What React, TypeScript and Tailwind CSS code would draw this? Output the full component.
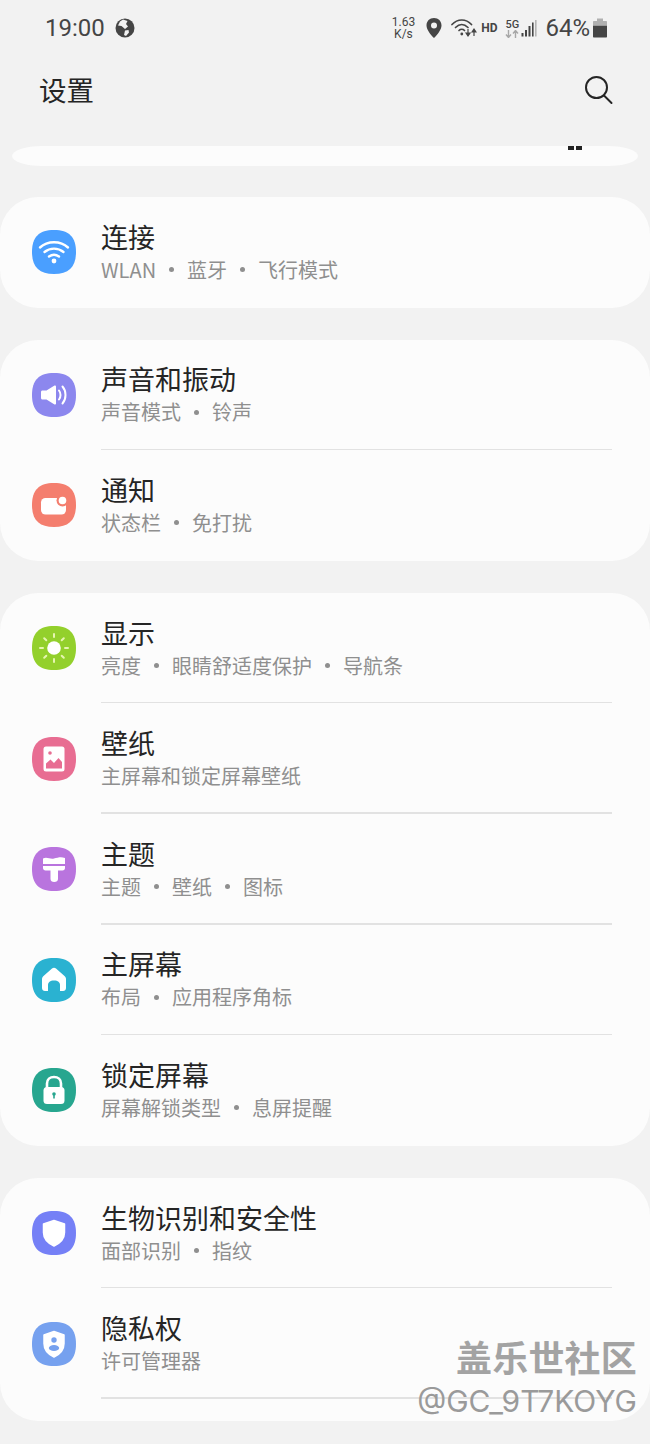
import React from 'react';

const cjk = { fontFamily: '"Noto Sans CJK SC", "Noto Sans", sans-serif' };

const Squircle = ({ color, children }: { color: string; children: React.ReactNode }) => (
    <svg width="44" height="44" viewBox="0 0 44 44" className="shrink-0">
        <path d="M22 0C37 0 44 7 44 22C44 37 37 44 22 44C7 44 0 37 0 22C0 7 7 0 22 0Z" fill={color} />
        {children}
    </svg>
);

const WifiIcon = () => (
    <Squircle color="#4a9fff">
        <g fill="none" stroke="#fff" strokeWidth="2.4" strokeLinecap="round">
            <path d="M8 17.5C15.5 10.5 28.5 10.5 36 17.5" />
            <path d="M12.5 22C18 17.5 26 17.5 31.5 22" />
            <path d="M17 26.5C20 24.3 24 24.3 27 26.5" />
        </g>
        <circle cx="22" cy="31" r="2.4" fill="#fff" />
    </Squircle>
);

const SoundIcon = () => (
    <Squircle color="#8c87ee">
        <path d="M10.5 17.5H14.5L22.5 12.5C23.2 12.2 24 12.6 24 13.5V30.5C24 31.4 23.2 31.8 22.5 31.5L14.5 26.5H10.5C9.6 26.5 9 25.9 9 25V19C9 18.1 9.6 17.5 10.5 17.5Z" fill="#fff" />
        <g fill="none" stroke="#fff" strokeWidth="2" strokeLinecap="round">
            <path d="M27 17.5C29 20 29 24 27 26.5" />
            <path d="M30.5 13.5C34.5 18 34.5 26 30.5 30.5" />
        </g>
    </Squircle>
);

const NotifyIcon = () => (
    <Squircle color="#f47e6e">
        <rect x="9" y="15" width="25" height="16.5" rx="4.5" fill="#fff" />
        <circle cx="30.5" cy="17.5" r="6" fill="#f47e6e" />
        <circle cx="30.5" cy="17.5" r="3.8" fill="#fff" />
    </Squircle>
);

const SunIcon = () => (
    <Squircle color="#93d02c">
        <circle cx="22" cy="22" r="6.8" fill="#fff" />
        <g stroke="#e6f5b0" strokeWidth="2" strokeLinecap="round">
            <path d="M22 8V11" />
            <path d="M22 33V36" />
            <path d="M8 22H11" />
            <path d="M33 22H36" />
            <path d="M12.2 12.2L14.3 14.3" />
            <path d="M29.7 29.7L31.8 31.8" />
            <path d="M12.2 31.8L14.3 29.7" />
            <path d="M29.7 14.3L31.8 12.2" />
        </g>
    </Squircle>
);

const WallpaperIcon = () => (
    <Squircle color="#e86d92">
        <rect x="11.5" y="9.5" width="21" height="25" rx="2.5" fill="#fff" />
        <circle cx="18" cy="16" r="1.8" fill="#e86d92" />
        <path d="M14 31.5V26.5L18.5 22.5L22 26L26.5 21L30 25V31.5Z" fill="#e86d92" />
    </Squircle>
);

const ThemeIcon = () => (
    <Squircle color="#b974de">
        <path d="M11 11.5C15 9.5 18 12.5 22 11.5C26 10.5 29 9.5 33 11V17H11Z" fill="#fff" />
        <path d="M11 19H33V21C33 22.5 32 23.5 30.5 23.5H26V32C26 34 24.5 35 22.2 35C20 35 18.5 34 18.5 32V23.5H13.5C12 23.5 11 22.5 11 21Z" fill="#fff" />
    </Squircle>
);

const HomeIcon = () => (
    <Squircle color="#2ab2d1">
        <path fillRule="evenodd" d="M20 10.5C21.2 9.5 22.8 9.5 24 10.5L32.5 18C33.5 18.8 34 20 34 21.2V30C34 32 32.7 33 31 33H28V27C28 24.5 26 22.5 22 22.5C18 22.5 16 24.5 16 27V33H13C11.3 33 10 32 10 30V21.2C10 20 10.5 18.8 11.5 18Z" fill="#fff" />
    </Squircle>
);

const LockIcon = () => (
    <Squircle color="#27a68f">
        <path d="M15 20V15.5C15 11.5 18 9 22 9C26 9 29 11.5 29 15.5V20" fill="none" stroke="#fff" strokeWidth="2.6" />
        <rect x="11.5" y="19" width="21" height="17" rx="3.5" fill="#fff" />
        <circle cx="22" cy="26" r="1.8" fill="#27a68f" />
        <rect x="21.2" y="26" width="1.6" height="4.5" fill="#27a68f" />
    </Squircle>
);

const ShieldIcon = () => (
    <Squircle color="#7580f6">
        <path d="M22 9.5L32.5 13V21.5C32.5 28 27.5 32.5 22 35C16.5 32.5 11.5 28 11.5 21.5V13Z" fill="#fff" stroke="#fff" strokeWidth="1.5" strokeLinejoin="round" />
    </Squircle>
);

const PrivacyIcon = () => (
    <Squircle color="#76a1ef">
        <path d="M22 9.5L32 13V21.5C32 28 27.5 32.5 22 35C16.5 32.5 12 28 12 21.5V13Z" fill="#fff" stroke="#fff" strokeWidth="1.5" strokeLinejoin="round" />
        <circle cx="22" cy="18" r="2.7" fill="#76a1ef" />
        <ellipse cx="22" cy="26" rx="5.2" ry="3" fill="#76a1ef" />
    </Squircle>
);

const Row = ({ icon, title, items, divider }: { icon: React.ReactNode; title: string; items: string[]; divider?: boolean }) => (
    <div className="h-[110.6px] relative flex items-center pl-[32px]">
        {icon}
        <div className="ml-[25px] flex flex-col -mt-[1px]">
            <div className="text-[27px] leading-[36px] text-[#252525]">{title}</div>
            <div className="flex items-center text-[20px] leading-[30px] text-[#8f8f8f]">
                {items.map((item, i) => (
                    <React.Fragment key={item}>
                        {i > 0 && <span className="w-[5px] h-[5px] rounded-full bg-[#8f8f8f] mx-[13px]" />}
                        <span>{item}</span>
                    </React.Fragment>
                ))}
            </div>
        </div>
        {divider && <div className="absolute left-[101px] right-[38px] bottom-0 h-[1.5px] bg-[#e2e2e2]" />}
    </div>
);

const Card = ({ children, className = '' }: { children: React.ReactNode; className?: string }) => (
    <div className={`bg-[#fcfcfc] rounded-[38px] overflow-hidden ${className}`}>{children}</div>
);

const StatusBar = () => (
    <div className="h-[56px] flex items-center pl-[45px] pr-[43px] text-[#454545]" style={{ fontFamily: 'Roboto, sans-serif' }}>
        <span className="text-[24px] leading-none">19:00</span>
        <svg width="20" height="20" viewBox="0 0 20 20" className="ml-[10px]">
            <circle cx="10" cy="10" r="9.5" fill="#454545" />
            <path d="M8 1.5L12.5 3L11 6L13 8.5L10 11L6.5 8L3 7.5L5 3.5Z" fill="#f2f2f2" />
            <path d="M10 12.5L13.5 12L14 14.5L11 18L9 17Z" fill="#f2f2f2" />
        </svg>
        <div className="ml-auto flex items-center">
            <div className="flex flex-col items-center text-[12px] leading-[12px] mr-[11px]">
                <span>1.63</span>
                <span>K/s</span>
            </div>
            <svg width="16" height="20" viewBox="0 0 16 20" className="mr-[9px]">
                <path fillRule="evenodd" d="M8 0C12.4 0 15.5 3.2 15.5 7.4C15.5 11.5 11.5 16.5 8 20C4.5 16.5 0.5 11.5 0.5 7.4C0.5 3.2 3.6 0 8 0ZM8 4.5A3 3 0 1 0 8 10.5A3 3 0 1 0 8 4.5Z" fill="#454545" />
            </svg>
            <svg width="26" height="20" viewBox="0 0 26 20" className="mr-[4px]">
                <g fill="none" stroke="#454545" strokeWidth="1.7" strokeLinecap="round">
                    <path d="M1 6.5C6.5 0.5 15 0.5 20.5 6.5" />
                    <path d="M4.5 9.5C8.5 5.5 13 5.5 17 9.5" />
                    <path d="M8 12.5C9.5 11 12 11 13.5 12.5" />
                </g>
                <circle cx="10.8" cy="16" r="1.4" fill="#454545" />
                <path d="M17 11V17M15 15L17 18L19 15Z M23 18V12M21 14L23 11L25 14Z" stroke="#454545" strokeWidth="1.2" fill="#454545" />
            </svg>
            <span className="text-[12px] font-bold mr-[8px]">HD</span>
            <div className="flex flex-col items-center mr-[2px]">
                <span className="text-[11px] leading-[11px] font-medium">5G</span>
                <svg width="14" height="8" viewBox="0 0 14 8">
                    <path d="M3.5 0V7M1 4.5L3.5 7.5L6 4.5M10.5 8V1M8 3.5L10.5 0.5L13 3.5" fill="none" stroke="#a8a8a8" strokeWidth="1.4" />
                </svg>
            </div>
            <svg width="16" height="18" viewBox="0 0 16 18" className="mr-[8px]">
                <rect x="0.5" y="14" width="2" height="3.5" fill="#454545" />
                <rect x="4" y="11" width="2" height="6.5" fill="#454545" />
                <rect x="7.5" y="7" width="2" height="10.5" fill="#454545" />
                <rect x="11" y="3.5" width="1.6" height="14" fill="#454545" />
                <rect x="14" y="1" width="1.6" height="16.5" fill="#b5b5b5" />
            </svg>
            <span className="text-[24px] leading-none">64%</span>
            <svg width="14" height="20" viewBox="0 0 14 20" className="ml-[3px]">
                <path d="M4 0.5H10V3H13C13.6 3 14 3.4 14 4V7H0V4C0 3.4 0.4 3 1 3H4Z" fill="#b0b0b0" />
                <path d="M0 7.5H14V18.5C14 19.2 13.6 19.5 13 19.5H1C0.4 19.5 0 19.2 0 18.5Z" fill="#454545" />
            </svg>
        </div>
    </div>
);

export default function App() {
    return (
        <div className="w-[650px] h-[1444px] bg-[#f2f2f2] relative overflow-hidden" style={cjk}>
            <StatusBar />

            <header className="h-[68px] flex items-center justify-between pl-[39px] pr-[36px]">
                <h1 className="text-[27.5px] font-normal text-[#252525]">设置</h1>
                <svg width="30" height="30" viewBox="0 0 30 30" fill="none" stroke="#252525" strokeWidth="2" strokeLinecap="round">
                    <circle cx="12.5" cy="12.5" r="10.5" />
                    <path d="M20 20.5L27.5 28" />
                </svg>
            </header>

            <div className="mt-[22px] mx-[12px] h-[20px] bg-[#fcfcfc] rounded-[30px/10px] relative">
                <div className="absolute left-[554px] top-0 w-[17px] h-[4px] flex gap-[2px] justify-center">
                    <span className="w-[6px] h-[4px] bg-[#222]" />
                    <span className="w-[6px] h-[4px] bg-[#222]" />
                </div>
            </div>

            <div className="mt-[31px] flex flex-col gap-[32px]">
                <Card>
                    <Row icon={<WifiIcon />} title="连接" items={['WLAN', '蓝牙', '飞行模式']} />
                </Card>
                <Card>
                    <Row icon={<SoundIcon />} title="声音和振动" items={['声音模式', '铃声']} divider />
                    <Row icon={<NotifyIcon />} title="通知" items={['状态栏', '免打扰']} />
                </Card>
                <Card>
                    <Row icon={<SunIcon />} title="显示" items={['亮度', '眼睛舒适度保护', '导航条']} divider />
                    <Row icon={<WallpaperIcon />} title="壁纸" items={['主屏幕和锁定屏幕壁纸']} divider />
                    <Row icon={<ThemeIcon />} title="主题" items={['主题', '壁纸', '图标']} divider />
                    <Row icon={<HomeIcon />} title="主屏幕" items={['布局', '应用程序角标']} divider />
                    <Row icon={<LockIcon />} title="锁定屏幕" items={['屏幕解锁类型', '息屏提醒']} />
                </Card>
                <Card>
                    <Row icon={<ShieldIcon />} title="生物识别和安全性" items={['面部识别', '指纹']} divider />
                    <Row icon={<PrivacyIcon />} title="隐私权" items={['许可管理器']} divider />
                    <div className="h-[22px]" />
                </Card>
            </div>

            {/* watermark */}
            <div className="absolute right-[13px] top-[1333px] flex flex-col items-end">
                <span className="text-[36px] leading-[46px] font-bold tracking-[0.2px] text-[#a3a3a3]">盖乐世社区</span>
                <span className="text-[30px] leading-[40px] text-[#9a9a9a] mt-[2px]" style={{ fontFamily: 'Inter, sans-serif' }}>@GC_9T7KOYG</span>
            </div>
        </div>
    );
}
